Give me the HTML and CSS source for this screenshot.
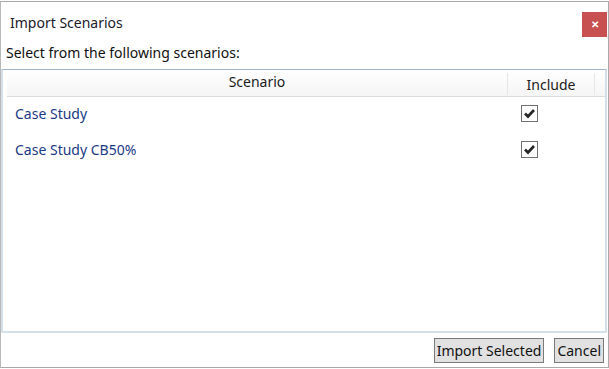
FILE: index.html
```html
<!DOCTYPE html>
<html lang="en">
<head>
    <meta charset="UTF-8">
    <meta name="viewport" content="width=device-width, initial-scale=1.0">
    <title>Import Scenarios</title>
    <link rel="stylesheet" href="styles.css">
</head>
<body>
    <div class="window">
        <div class="title-bar">
            <span class="title">Import Scenarios</span>
            <button class="close-btn" aria-label="Close">&#x2715;</button>
        </div>

        <p class="prompt">Select from the following scenarios:</p>

        <div class="grid">
            <div class="grid-row grid-head">
                <div class="cell-name">Scenario</div>
                <div class="cell-include">Include</div>
                <div class="cell-fill"></div>
            </div>
            <div class="grid-row">
                <div class="cell-gap"></div>
                <div class="cell-name">Case Study</div>
                <div class="cell-include">
                    <span class="check">
                        <svg width="15" height="15" viewBox="0 0 15 15"><path d="M3 7.5 L6 10.5 L12 4" fill="none" stroke="#262626" stroke-width="2.6"/></svg>
                    </span>
                </div>
                <div class="cell-fill"></div>
            </div>
            <div class="grid-row">
                <div class="cell-gap"></div>
                <div class="cell-name">Case Study CB50%</div>
                <div class="cell-include">
                    <span class="check">
                        <svg width="15" height="15" viewBox="0 0 15 15"><path d="M3 7.5 L6 10.5 L12 4" fill="none" stroke="#262626" stroke-width="2.6"/></svg>
                    </span>
                </div>
                <div class="cell-fill"></div>
            </div>
        </div>

        <div class="actions">
            <button class="btn">Import Selected</button>
            <button class="btn">Cancel</button>
        </div>
    </div>
</body>
</html>
```

FILE: styles.css
```css
body {
    margin: 0;
    background: #fff;
    font-family: "Noto Sans", "Open Sans", sans-serif;
    color: #1b1b1b;
}

.window {
    box-sizing: border-box;
    width: 609px;
    height: 367px;
    margin-top: 1px;
    border: 1px solid #a9a9a9;
    border-left-color: #b9b9b9;
    background: #fff;
    display: flex;
    flex-direction: column;
}

.title-bar {
    display: flex;
    align-items: center;
    justify-content: space-between;
    height: 41px;
    padding: 0 1px 0 9px;
    box-sizing: border-box;
}

.title {
    font-size: 14px;
    color: #1a1a2a;
}

.close-btn {
    width: 25px;
    height: 25px;
    margin-top: 4px;
    border: none;
    background: #c75050;
    color: #fff;
    font-size: 10px;
    font-weight: bold;
    padding: 0;
}

.prompt {
    margin: 0;
    padding: 0 5px;
    height: 26px;
    font-size: 14px;
    color: #111;
}

.grid {
    flex: 1;
    margin-right: 1px;
    border-top: 1px solid #9db2c6;
    border-left: 2px solid #d3dfe9;
    border-bottom: 2px solid #d3dfe9;
    border-right: 2px solid #d3dfe9;
}

.grid-row {
    display: flex;
    height: 36px;
    align-items: center;
    font-size: 14px;
    color: #203a85;
}

/* header row sits a bit in from the left edge */
.grid-head {
    height: 25px;
    color: #1b1b1b;
    background: linear-gradient(#fff, #f5f5f5);
    border-bottom: 1px solid #dcdcdc;
    margin-left: 4px;
    padding-bottom: 1px;
}

.grid-head .cell-name {
    padding-left: 0;
    text-align: center;
}

.grid-head .cell-include {
    padding-left: 0;
    justify-content: center;
    border-left: 1px solid #e6e6e6;
    border-right: 1px solid #e6e6e6;
    height: 22px;
    margin-top: 3px;
}

.cell-gap {
    width: 4px;
}

.cell-name {
    width: 500px;
    padding-left: 8px;
    box-sizing: border-box;
    padding-bottom: 3px;
}

.cell-include {
    width: 88px;
    box-sizing: border-box;
    padding-left: 14px;
    height: 100%;
    display: flex;
    align-items: center;
}

.cell-fill {
    flex: 1;
}

.check {
    display: block;
    width: 15px;
    height: 15px;
    border: 1px solid #707070;
    background: #fff;
    margin-bottom: 4px;
}

.check svg {
    display: block;
}

.actions {
    display: flex;
    justify-content: flex-end;
    gap: 10px;
    padding: 5px 4px 4px;
}

.btn {
    height: 25px;
    padding: 0 2px;
    border: 1px solid #7a7a7a;
    background: #e1e1e1;
    font-family: inherit;
    font-size: 14px;
    color: #111;
}
```
